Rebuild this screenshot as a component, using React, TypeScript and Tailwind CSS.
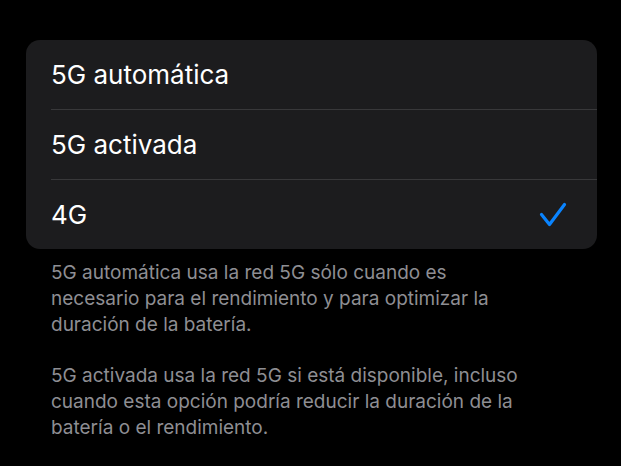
import React from 'react';

const options = ['5G automática', '5G activada', '4G'];
const selected = '4G';

const Check: React.FC = () => (
  <svg width="28" height="26" viewBox="0 0 28 26" fill="none" className="text-[#0a84ff]">
    <path
      d="M2.5 12.5 L10.5 22.5 L25.5 2.5"
      stroke="currentColor"
      strokeWidth="3.2"
      strokeLinecap="round"
      strokeLinejoin="round"
    />
  </svg>
);

const App: React.FC = () => {
  return (
    <div
      className="w-[621px] h-[466px] bg-black overflow-hidden pt-[40px] px-[24px]"
      style={{ fontFamily: 'Inter, "Liberation Sans", sans-serif' }}
    >
      <div className="ml-[2px] w-[571px] bg-[#1c1c1e] rounded-[14px] overflow-hidden">
        {options.map((opt, i) => (
          <div key={opt}>
            {i > 0 && <div className="ml-[25px] h-px bg-[#38383a]" />}
            <div className="h-[69px] flex items-center justify-between pl-[25px] pr-[30px]">
              <span className="text-white text-[26px] leading-[32px]">{opt}</span>
              {opt === selected && <Check />}
            </div>
          </div>
        ))}
      </div>
      <div className="mt-[11px] pl-[27px] pr-[10px] text-[#8e8e93] text-[19px] leading-[26px]">
        <p>
          5G automática usa la red 5G sólo cuando es
          <br />
          necesario para el rendimiento y para optimizar la
          <br />
          duración de la batería.
        </p>
        <p className="mt-[25px]">
          5G activada usa la red 5G si está disponible, incluso
          <br />
          cuando esta opción podría reducir la duración de la
          <br />
          batería o el rendimiento.
        </p>
      </div>
    </div>
  );
};

export default App;
